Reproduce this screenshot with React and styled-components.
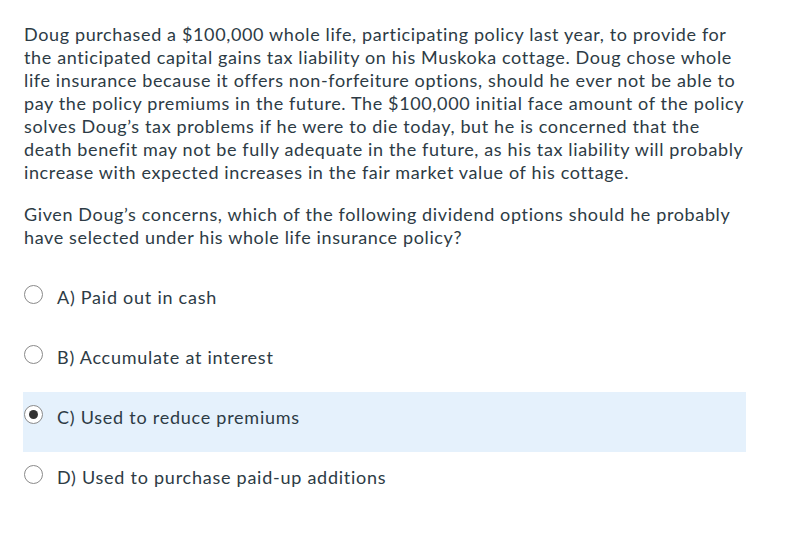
import React, { useState } from "react";
import styled, { createGlobalStyle } from "styled-components";

const Global = createGlobalStyle`
  html, body { margin: 0; padding: 0; background: #fff; }
  body { font-family: Lato, "Noto Sans", sans-serif; color: #2d3b45; }
`;

const Page = styled.div`
  padding: 23px 0 0 23px;
  width: 723px;
`;

const Para = styled.p`
  margin: 0 0 19px 1px;
  font-size: 18px;
  letter-spacing: 0.63px;
  line-height: 23px;
  width: 726px;
`;

const Options = styled.div`
  margin-top: 23px;
  display: flex;
  flex-direction: column;
`;

const Row = styled.label`
  display: flex;
  align-items: flex-start;
  gap: 14px;
  height: 60px;
  box-sizing: border-box;
  padding: 14px 0 0 1px;
  background: ${(p) => (p.$selected ? "#e5f1fc" : "transparent")};
  font-size: 18px;
  letter-spacing: 0.75px;
  line-height: 23px;
  cursor: pointer;
`;

const Radio = styled.span`
  flex: none;
  width: 19px;
  height: 19px;
  margin-top: -1px;
  box-sizing: border-box;
  border-radius: 50%;
  border: 1px solid #8a8a8a;
  background: #fff;
  display: flex;
  align-items: center;
  justify-content: center;
  &::after {
    content: "";
    width: 9px;
    height: 9px;
    border-radius: 50%;
    background: ${(p) => (p.$checked ? "#333" : "transparent")};
  }
`;

const options = [
  "A) Paid out in cash",
  "B) Accumulate at interest",
  "C) Used to reduce premiums",
  "D) Used to purchase paid-up additions",
];

export default function App() {
  const [sel, setSel] = useState(2);
  return (
    <>
      <Global />
      <Page>
        <Para>
          Doug purchased a $100,000 whole life, participating policy last year, to provide for
          the anticipated capital gains tax liability on his Muskoka cottage. Doug chose whole
          life insurance because it offers non-forfeiture options, should he ever not be able to
          pay the policy premiums in the future. The $100,000 initial face amount of the policy
          solves Doug’s tax problems if he were to die today, but he is concerned that the
          death benefit may not be fully adequate in the future, as his tax liability will probably
          increase with expected increases in the fair market value of his cottage.
        </Para>
        <Para>
          Given Doug’s concerns, which of the following dividend options should he probably
          have selected under his whole life insurance policy?
        </Para>
        <Options>
          {options.map((o, i) => (
            <Row key={o} $selected={sel === i} onClick={() => setSel(i)}>
              <Radio $checked={sel === i} />
              <span>{o}</span>
            </Row>
          ))}
        </Options>
      </Page>
    </>
  );
}
